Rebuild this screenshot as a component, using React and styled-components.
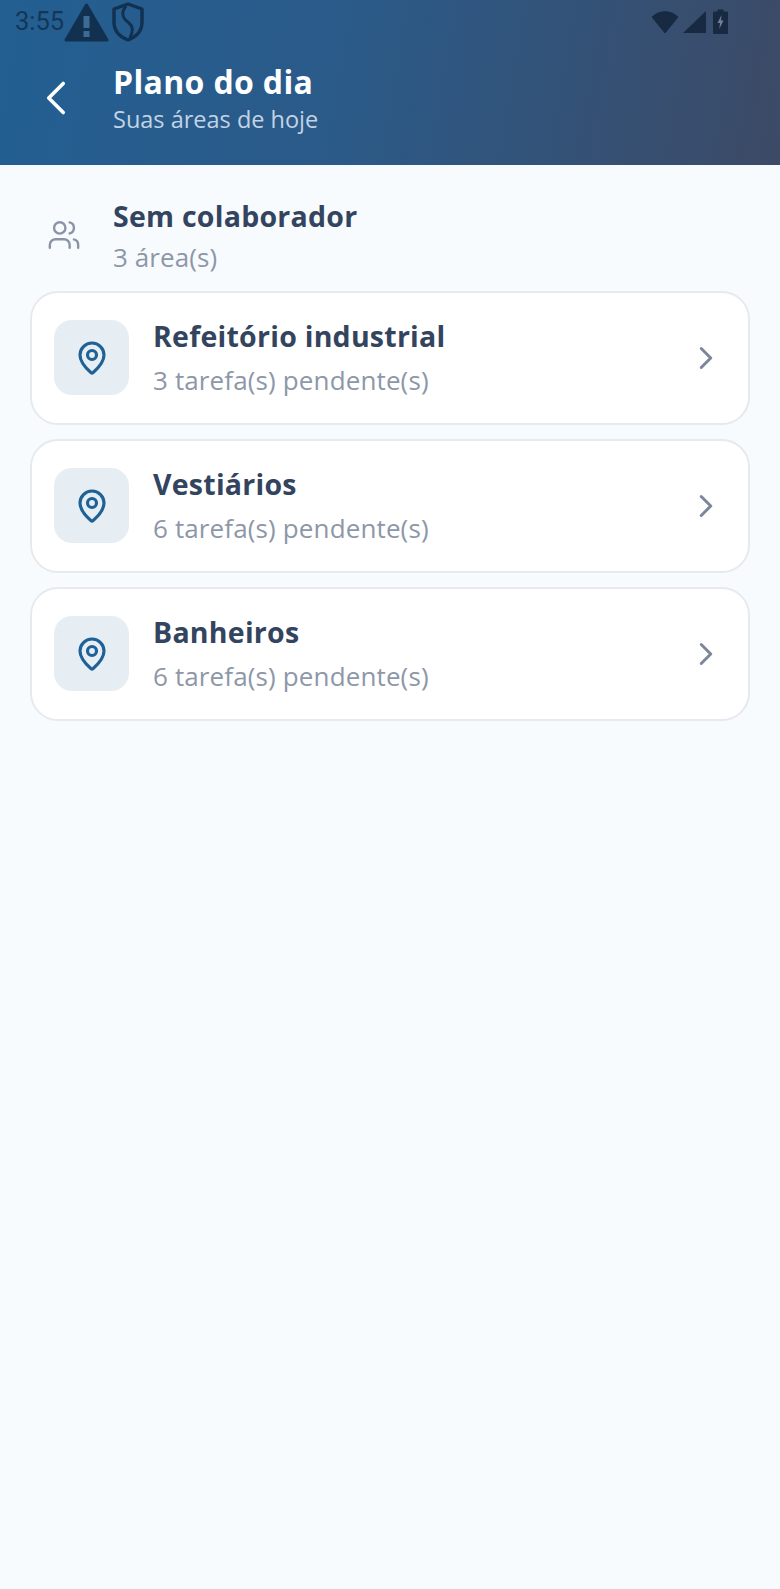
import React from "react";
import styled, { createGlobalStyle } from "styled-components";
import { ChevronLeft, ChevronRight, MapPin, Users } from "lucide-react";

const areas = [
  { name: "Refeitório industrial", pending: 3 },
  { name: "Vestiários", pending: 6 },
  { name: "Banheiros", pending: 6 },
];

export default function App() {
  return (
    <Page>
      <GlobalStyle />
      <Header>
        <StatusBar>
          <StatusLeft>
            <Clock>3:55</Clock>
            <svg width="45" height="40" viewBox="0 0 45 40">
              <path d="M22.5 3 L43 38 H2 Z" fill="#12304f" stroke="#12304f" strokeWidth="3" strokeLinejoin="round" />
              <rect x="19.5" y="14" width="6" height="12" fill="#3c6b96" />
              <rect x="19.5" y="29" width="6" height="6" fill="#3c6b96" />
            </svg>
            <svg width="34" height="42" viewBox="0 0 34 42">
              <path d="M17 3 L31 8 V21 C31 30 25 36 17 39 C9 36 3 30 3 21 V8 Z" fill="none" stroke="#12304f" strokeWidth="3.4" strokeLinejoin="round" />
              <path d="M15 5 C8 14 14 19 18 22 C23 26 22 31 19 37" fill="none" stroke="#12304f" strokeWidth="3" />
            </svg>
          </StatusLeft>
          <StatusRight>
            <svg width="28" height="24" viewBox="0 0 28 24">
              <path d="M1 7 C8 0 20 0 27 7 L14 23 Z" fill="#182a42" stroke="#182a42" strokeLinejoin="round" />
            </svg>
            <svg width="26" height="24" viewBox="0 0 26 24">
              <path d="M23 1 V23 H0 Z" fill="#182a42" />
            </svg>
            <svg width="15" height="25" viewBox="0 0 15 25">
              <path d="M4.5 0.5 H10.5 V2.5 H14 a1 1 0 0 1 1 1 V24 a1 1 0 0 1 -1 1 H1 a1 1 0 0 1 -1 -1 V3.5 a1 1 0 0 1 1 -1 H4.5 Z" fill="#182a42" />
              <path d="M8.5 6 L4.5 14 H7 L6.3 20 L10.5 11.5 H8 Z" fill="#6f8094" />
            </svg>
          </StatusRight>
        </StatusBar>
        <TitleRow>
          <BackIcon size={58} strokeWidth={1.5} />
          <TitleBlock>
            <Title>Plano do dia</Title>
            <Subtitle>Suas áreas de hoje</Subtitle>
          </TitleBlock>
        </TitleRow>
      </Header>
      <Content>
        <Group>
          <GroupIcon size={34} strokeWidth={1.7} />
          <div>
            <GroupName>Sem colaborador</GroupName>
            <GroupCount>3 área(s)</GroupCount>
          </div>
        </Group>
        <CardList>
          {areas.map((area) => (
            <Card key={area.name}>
              <PinBox>
                <MapPin size={36} strokeWidth={2.1} />
              </PinBox>
              <CardText>
                <CardTitle>{area.name}</CardTitle>
                <CardSub>{area.pending} tarefa(s) pendente(s)</CardSub>
              </CardText>
              <Arrow size={38} strokeWidth={1.9} />
            </Card>
          ))}
        </CardList>
      </Content>
    </Page>
  );
}

const GlobalStyle = createGlobalStyle`
  html, body {
    margin: 0;
    padding: 0;
    background: #f7fbfe;
  }
  * {
    box-sizing: border-box;
  }
`;

const Page = styled.div`
  width: 780px;
  min-height: 1589px;
  background: #f7fbfe;
  font-family: "Open Sans", sans-serif;
  overflow: hidden;
`;

const Header = styled.header`
  height: 165px;
  background: linear-gradient(100deg, #235f92 0%, #2b5a88 45%, #3c4a66 100%);
`;

const StatusBar = styled.div`
  height: 44px;
  padding: 0 52px 0 15px;
  display: flex;
  align-items: flex-start;
  justify-content: space-between;
`;

const StatusLeft = styled.div`
  display: flex;
  align-items: center;
  gap: 2px;
  height: 44px;
`;

const Clock = styled.span`
  font-family: "Roboto", sans-serif;
  font-size: 25.5px;
  color: #12304f;
  opacity: 0.85;
  margin-right: -2px;
  position: relative;
  top: -1px;
`;

const StatusRight = styled.div`
  display: flex;
  align-items: center;
  gap: 4px;
  padding-top: 9px;
`;

const TitleRow = styled.div`
  display: flex;
  align-items: center;
  padding-left: 27px;
  gap: 28px;
  margin-top: 19px;
`;

const BackIcon = styled(ChevronLeft)`
  color: #fff;
  flex: none;
  margin-bottom: 2px;
`;

const TitleBlock = styled.div`
  display: flex;
  flex-direction: column;
`;

const Title = styled.h1`
  margin: 0;
  font-size: 32px;
  line-height: 38px;
  font-weight: 700;
  letter-spacing: 0.35px;
  color: #fff;
`;

const Subtitle = styled.span`
  margin-top: 3px;
  font-size: 23.5px;
  line-height: 30px;
  color: #c3d3e4;
`;

const Content = styled.main`
  padding: 31px 30px 0;
`;

const Group = styled.div`
  display: flex;
  align-items: center;
  gap: 32px;
  padding-left: 17px;
  height: 82px;
  margin-bottom: 13px;
`;

const GroupIcon = styled(Users)`
  color: #8a94a6;
  flex: none;
  margin-bottom: 4px;
`;

const GroupName = styled.div`
  font-size: 28.5px;
  line-height: 40px;
  font-weight: 700;
  letter-spacing: 0.25px;
  color: #33445e;
`;

const GroupCount = styled.div`
  font-size: 26px;
  line-height: 42px;
  letter-spacing: 0.1px;
  color: #8d97a8;
`;

const CardList = styled.div`
  display: flex;
  flex-direction: column;
  gap: 14px;
`;

const Card = styled.div`
  height: 134px;
  display: flex;
  align-items: center;
  padding: 0 30px 0 22px;
  background: #fff;
  border: 2px solid #e6eaef;
  border-radius: 28px;
`;

const PinBox = styled.div`
  width: 75px;
  height: 75px;
  margin-bottom: 1px;
  flex: none;
  display: flex;
  align-items: center;
  justify-content: center;
  background: #e6edf3;
  border-radius: 18px;
  color: #1f6096;
`;

const CardText = styled.div`
  flex: 1;
  padding: 1px 0 0 24px;
`;

const CardTitle = styled.div`
  font-size: 28.5px;
  line-height: 42px;
  font-weight: 700;
  letter-spacing: 0.25px;
  color: #33445e;
`;

const CardSub = styled.div`
  margin-top: 1px;
  font-size: 26px;
  line-height: 44px;
  letter-spacing: 0.13px;
  color: #8d97a8;
`;

const Arrow = styled(ChevronRight)`
  color: #7d879b;
  flex: none;
  margin-right: -7px;
`;
